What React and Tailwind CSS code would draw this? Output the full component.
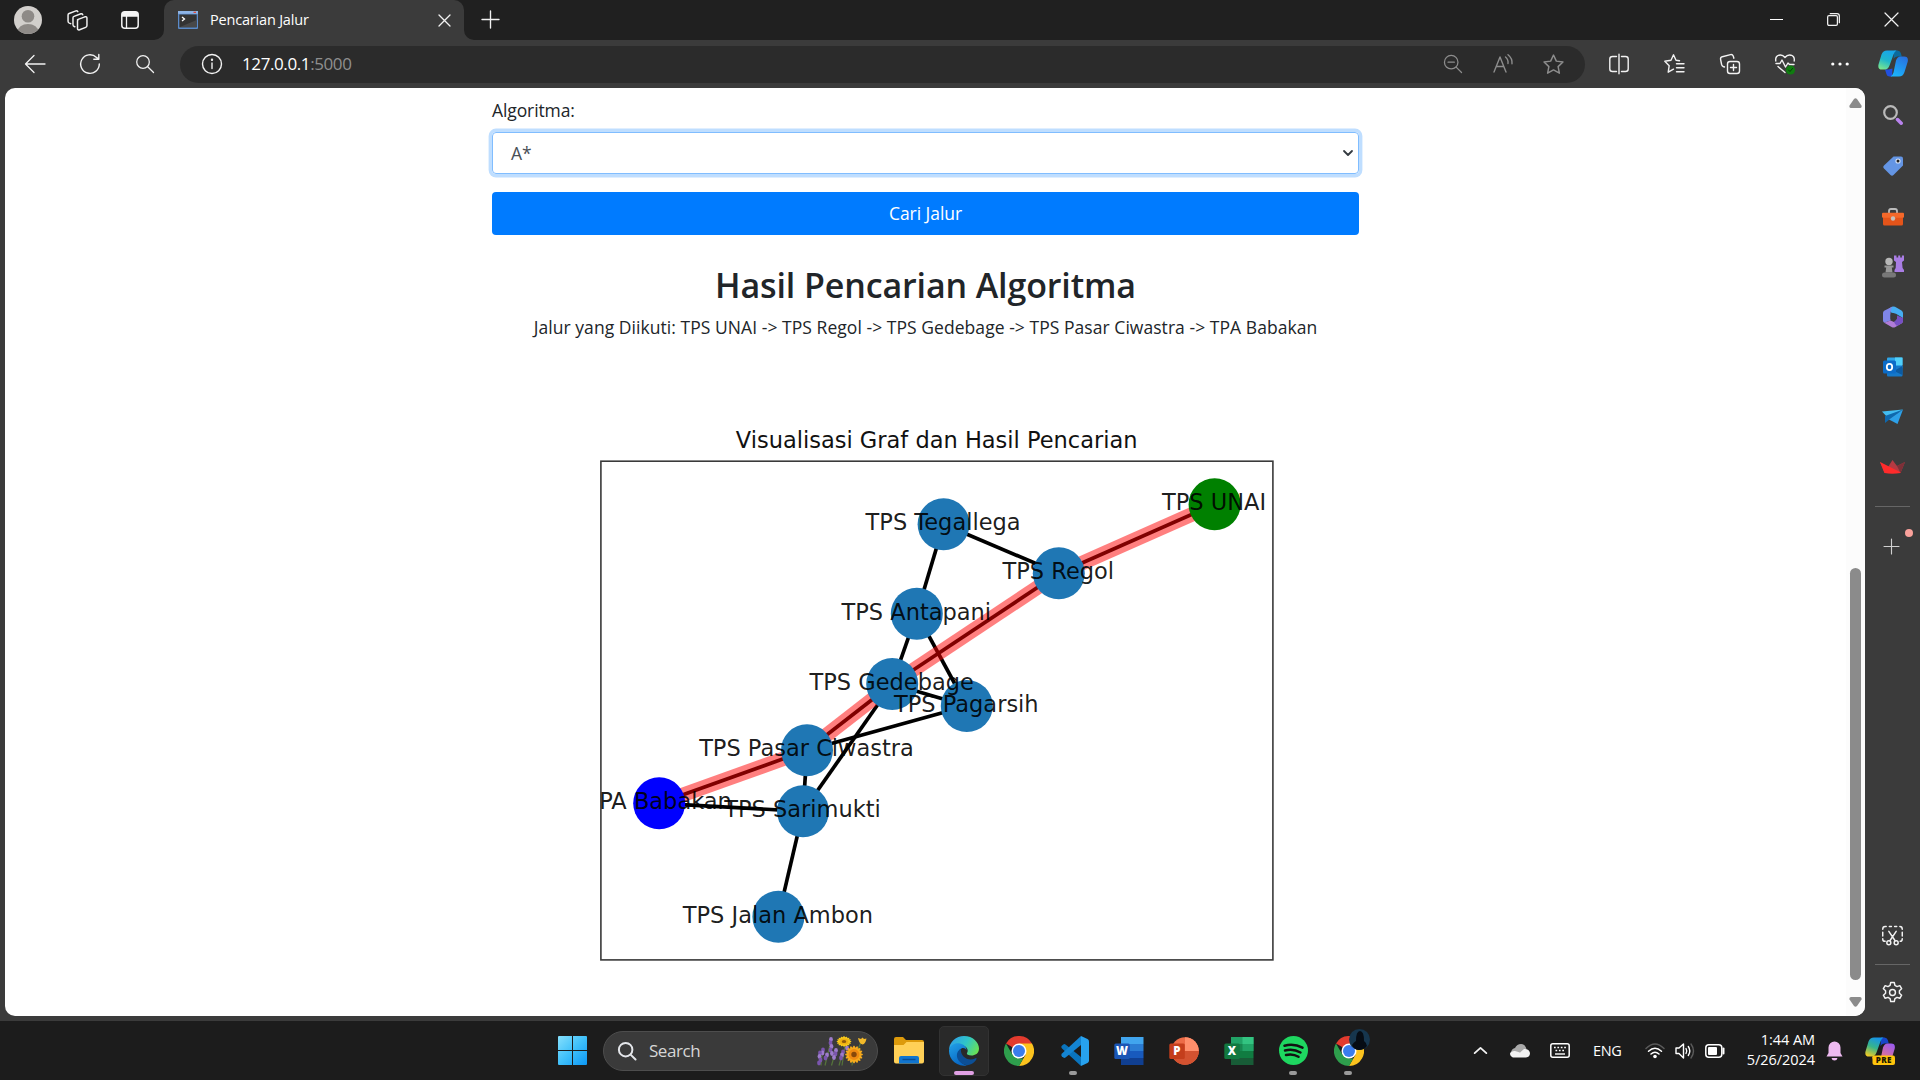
import React from "react";

const NODES = {
  tegallega: { x: 943.6, y: 524.3, label: "TPS Tegallega" },
  unai: { x: 1214.6, y: 504.3, label: "TPS UNAI", fill: "#008000" },
  regol: { x: 1058.8, y: 573.3, label: "TPS Regol" },
  antapani: { x: 916.8, y: 613.7, label: "TPS Antapani" },
  gedebage: { x: 892.2, y: 684, label: "TPS Gedebage" },
  pagarsih: { x: 966.8, y: 706, label: "TPS Pagarsih" },
  ciwastra: { x: 807, y: 750.3, label: "TPS Pasar Ciwastra" },
  babakan: { x: 659.2, y: 803.3, label: "TPA Babakan", fill: "#0000ff" },
  sarimukti: { x: 803, y: 811.3, label: "TPS Sarimukti" },
  ambon: { x: 778.4, y: 916.7, label: "TPS Jalan Ambon" },
};

const PATH = [
  ["unai", "regol"],
  ["regol", "gedebage"],
  ["gedebage", "ciwastra"],
  ["ciwastra", "babakan"],
];

const EDGES = [
  ...PATH,
  ["tegallega", "regol"],
  ["tegallega", "antapani"],
  ["antapani", "gedebage"],
  ["antapani", "pagarsih"],
  ["gedebage", "pagarsih"],
  ["gedebage", "sarimukti"],
  ["ciwastra", "pagarsih"],
  ["ciwastra", "sarimukti"],
  ["babakan", "sarimukti"],
  ["sarimukti", "ambon"],
];

function Line({ edge, ...rest }) {
  const [a, b] = edge.map((k) => NODES[k]);
  return <line x1={a.x} y1={a.y} x2={b.x} y2={b.y} {...rest} />;
}

function Graph() {
  return (
    <svg viewBox="590 410 700 560" className="mt-[69px] ml-[98px] block h-[560px] w-[700px] shrink-0 font-['DejaVu_Sans',sans-serif]">
      <defs>
        <clipPath id="axes">
          <rect x="600" y="461" width="673" height="499" />
        </clipPath>
      </defs>
      <text x="936.7" y="448" fontSize="22.5" textAnchor="middle" fill="#111">Visualisasi Graf dan Hasil Pencarian</text>
      {EDGES.map((e) => (
        <Line key={e.join()} edge={e} stroke="#000" strokeWidth="3.7" />
      ))}
      {PATH.map((e) => (
        <Line key={e.join()} edge={e} stroke="#ff0000" strokeOpacity="0.5" strokeWidth="14.5" />
      ))}
      {Object.entries(NODES).map(([k, n]) => (
        <circle key={k} cx={n.x} cy={n.y} r="26" fill={n.fill || "#1f77b4"} />
      ))}
      <rect x="600.9" y="461.2" width="672" height="498.7" fill="none" stroke="#3a3a3a" strokeWidth="1.6" />
      <g clipPath="url(#axes)">
        {Object.entries(NODES).map(([k, n]) => (
          <text key={k} x={n.x - 0.5} y={n.y + 6} fontSize="22.5" textAnchor="middle" fill="#000" fillOpacity="0.9">{n.label}</text>
        ))}
      </g>
    </svg>
  );
}

function Cell({ className = "", children }) {
  return <div className={"flex shrink-0 items-center justify-center " + className}>{children}</div>;
}

function Ico({ s = 20, w = 1.4, c = "#f2f2f2", children }) {
  return (
    <svg width={s} height={s} viewBox="0 0 20 20" fill="none" stroke={c} strokeWidth={w} strokeLinecap="round" strokeLinejoin="round" className="block shrink-0 overflow-visible">
      {children}
    </svg>
  );
}

function TitleBar() {
  return (
    <div className="flex h-10 shrink-0 bg-[#202020]">
      <Cell className="w-14">
        <svg width="28" height="28" viewBox="0 0 28 28">
          <defs><clipPath id="av"><circle cx="14" cy="14" r="14" /></clipPath></defs>
          <g clipPath="url(#av)">
            <rect width="28" height="28" fill="#d2cfcc" />
            <circle cx="14" cy="10.3" r="6.3" fill="#8e8a87" />
            <ellipse cx="14" cy="26" rx="10.5" ry="8" fill="#8e8a87" />
          </g>
        </svg>
      </Cell>
      <Cell className="w-[43px]">
        <Ico s={21} w={1.4}>
          <path d="M10 9.200 17 6.500q2-.6 2 1.300v7q0 1.200-1.200 1.700L12 18.800q-2 .6-2-1.300V10.300q0-.8.8-1.200Z" />
          <path d="M7.500 16 6.800 15.700Q5.700 15.300 5.700 14V7.400q0-.9 1-1.300l6.600-2.500q1.200-.3 1.700.9" />
          <path d="M3.500 13 2.200 12.500Q1 12 1 10.700V4.700q0-1 1-1.400L8.500 .8q1.200-.3 1.800.8" />
        </Ico>
      </Cell>
      <Cell className="w-[62px]">
        <svg width="18" height="18" viewBox="0 0 18 18" fill="none">
          <rect x=".8" y=".8" width="16.400" height="16.400" rx="3" stroke="#f4f4f4" strokeWidth="1.500" />
          <path d="M.8 5.800V4A3.200 3.200 0 0 1 4 .8h10A3.200 3.200 0 0 1 17.200 4v1.800Z" fill="#f4f4f4" />
          <path d="M5.500 5v12" stroke="#f4f4f4" strokeWidth="1.300" />
        </svg>
      </Cell>
      <div className="flex h-10">
        <svg width="10" height="10" className="-ml-[7px] block self-end"><path d="M0 10A10 10 0 0 0 10 0V10Z" fill="#3b3b3b" /></svg>
        <div className="flex h-10 w-[300px] items-center rounded-t-[10px] bg-[#3b3b3b] pr-[14px] pl-[14px]">
          <svg width="20" height="18" viewBox="0 0 20 18">
            <rect width="20" height="18" rx="1" fill="#5b8bc9" />
            <rect width="20" height="2.800" fill="#8db4e6" />
            <rect x="15.500" y=".7" width="2.500" height="1.300" fill="#e04a3a" />
            <rect x="1.300" y="3.500" width="17.400" height="12.800" fill="#333" />
            <path d="M1.300 16.300 18.700 9v7.300Z" fill="#484848" />
            <path d="m4 6 2.500 2L4 10" stroke="#fff" strokeWidth="1.300" fill="none" />
          </svg>
          <span className="ml-3 flex-1 text-[14.5px] tracking-[-0.19px] text-white">Pencarian Jalur</span>
          <Ico s={11} w={2.4}><path d="m0 0 20 20M20 0 0 20" /></Ico>
        </div>
        <svg width="10" height="10" className="block self-end"><path d="M10 10A10 10 0 0 1 0 0V10Z" fill="#3b3b3b" /></svg>
      </div>
      <Cell className="ml-[5px] h-[39px] w-[22px]"><Ico s={17} w={1.6}><path d="M10 0v20M0 10h20" /></Ico></Cell>
      <div className="flex-1" />
      <Cell className="h-[39px] w-[57px]"><div className="h-px w-[13px] bg-white" /></Cell>
      <Cell className="h-[39px] w-[57px]">
        <Ico s={13} w={1.9}><rect x="1" y="4" width="15" height="15" rx="2" /><path d="M5 1h10.500Q19 1 19 4.500V15" /></Ico>
      </Cell>
      <Cell className="h-[39px] w-[58px]"><Ico s={13} w={1.9}><path d="m0 0 20 20M20 0 0 20" /></Ico></Cell>
    </div>
  );
}

const STAR = "m10 1 2.700 5.800 6.300.8-4.600 4.400 1.200 6.300L10 15.200 4.400 18.300l1.200-6.300L1 7.600l6.300-.8Z";

function CopilotMark({ s = 30, pre }) {
  const id = pre ? "cpb" : "cpa";
  return (
    <svg width={s} height={s} viewBox="0 0 30 30" className="block shrink-0">
      <defs>
        <linearGradient id={id + "1"} x1="0.600" y1="0" x2="0.200" y2="1">
          <stop offset="0" stopColor={pre ? "#1694e8" : "#18a5ea"} />
          <stop offset=".5" stopColor={pre ? "#37b58a" : "#1fb6cc"} />
          <stop offset="1" stopColor={pre ? "#f5cc22" : "#7be78d"} />
        </linearGradient>
        <linearGradient id={id + "2"} x1="0.800" y1="0" x2="0.300" y2="1">
          <stop offset="0" stopColor={pre ? "#9a5bf0" : "#2870e0"} />
          <stop offset="1" stopColor={pre ? "#f77a72" : "#1bb4fb"} />
        </linearGradient>
      </defs>
      <path d="M16 1.500h3.500Q22 1.500 22.800 4l1 3.500h-4.500q-2.500 0-3.800 2.500Z" fill={pre ? "#1746c8" : "#0b6a9c"} />
      <path d="M14 27.500h-2.500q-2.300 0-3-2.200L7 20.500h3.500l4-1Z" fill={pre ? "#ec9c35" : "#2150df"} />
      <path d="M9 1.500H18.500q-2 1-3 4L11.500 16.500Q10 20.500 7 20.500H4Q-.5 20.500.5 15.500L3.500 5.500Q5 1.500 9 1.500Z" fill={"url(#" + id + "1)"} />
      <path d="M21 27.500H12.500q2-1 3-4L18 11.500Q19.500 7.500 22.500 7.500H26q4.800 0 3.700 5.200L26.500 23Q25 27.500 21 27.500Z" fill={"url(#" + id + "2)"} />
      {pre && <rect x="7.500" y="19.500" width="22.500" height="9.500" rx="2" fill="#ffc40c" />}
      {pre && <text x="18.800" y="27.200" fontSize="8" fontWeight="800" textAnchor="middle" fill="#201800" letterSpacing=".4">PRE</text>}
    </svg>
  );
}

function Toolbar() {
  return (
    <div className="flex h-12 shrink-0 items-center bg-[#3b3b3b]">
      <Cell className="ml-[10px] w-[50px]"><Ico w={1.3}><path d="M20 10H.5M9 1.500 0.500 10 9 18.500" /></Ico></Cell>
      <Cell className="w-[60px]"><Ico><path d="M19.300 10A9.300 9.300 0 1 1 16.500 3.400L18.500 5M18.800 .5V5.200h-5" /></Ico></Cell>
      <Cell className="w-[50px]"><Ico s={18}><circle cx="7.800" cy="7.800" r="7" /><path d="m13 13 6.500 6.500" /></Ico></Cell>
      <div className="ml-[10px] flex h-[37px] w-[1405px] items-center rounded-full bg-[#2b2b2b] pl-[22px]">
        <Ico><circle cx="10" cy="10" r="9.500" /><path d="M10 9v5.500" /><circle cx="10" cy="5.800" r=".5" fill="#fff" /></Ico>
        <span className="ml-5 flex-1 text-[17px] tracking-[-0.4px] text-white">127.0.0.1<span className="text-[#8f8f8f]">:5000</span></span>
        <Cell className="w-[50px]"><Ico s={18} c="#8d8d8d"><circle cx="8" cy="8" r="7.500" /><path d="m13.500 13.500 6 6M4.500 8h7" /></Ico></Cell>
        <Cell className="w-[50px]"><Ico s={20} c="#8d8d8d"><path d="m1 18 6-15 6 15M3.300 12.500h7.400M12.500 3q3 2.500 2.500 6.500M15 .8q4.500 3.500 4 9" /></Ico></Cell>
        <Cell className="mr-[7px] w-[50px]"><Ico s={21} c="#8d8d8d"><path d={STAR} /></Ico></Cell>
      </div>
      <Cell className="ml-[6px] w-[55px]"><Ico><path d="M7.500 2.500H3.500Q.8 2.500.8 5v10q0 2.500 2.700 2.500h4M12.500 2.500h4q2.700 0 2.700 2.500v10q0 2.500-2.700 2.500h-4M10 .3v19.400" /></Ico></Cell>
      <Cell className="w-[56px]"><Ico><path d="M15.500 6.700 12 6.300 9.500.8 7 6.300 .8 7.200l4.400 4.500-1 6.500 5.300-3M12.500 9.700H20M12.500 13.700H20M12.500 17.700H20" /></Ico></Cell>
      <Cell className="w-[55px]"><Ico><rect x="7.500" y="7.500" width="12" height="12" rx="2.500" /><path d="M13.500 10.500v6M10.500 13.500h6M4.500 13 3.200 12.500Q2 12 1.600 10.500L.6 5.500Q.2 3.300 2.300 2.700L10.500.6Q12.500.2 13.200 2l.7 2.200" /></Ico></Cell>
      <Cell className="w-[55px]">
        <Ico><path d="M.8 7Q0 2.500 4 1.200 7.500.4 10 3.500 12.500.4 16 1.200 20 2.500 19.200 7M1 9.500h4L7 6l3.500 7L13 9l1.500 1.500H19M3 12.500l7 6" /><circle cx="15.500" cy="16" r="4.600" fill="#107c10" stroke="none" /><path d="m13.500 16 1.500 1.500 2.500-3" stroke="#063f06" strokeWidth="1" /></Ico>
      </Cell>
      <Cell className="w-[55px]"><Ico s={18} w={0} c="none"><g fill="#fff"><circle cx="2" cy="10" r="1.800" /><circle cx="10" cy="10" r="1.800" /><circle cx="18" cy="10" r="1.800" /></g></Ico></Cell>
      <Cell className="ml-[11px] w-[30px]"><CopilotMark /></Cell>
    </div>
  );
}

function Page() {
  return (
    <div className="flex h-[928px] w-[1860px] shrink-0 overflow-hidden rounded-[10px] bg-white">
      <main className="flex w-[1841px] flex-col pl-[487px] text-[17.5px] text-[#212529]">
        <div className="mt-2 flex h-7 items-center tracking-[-0.1px]">Algoritma:</div>
        <div className="mt-2 flex h-[42px] w-[867px] shrink-0 items-center justify-between rounded border border-[#80bdff] pr-[5px] pl-[18px] text-[#495057] ring-[3.4px] ring-[#bfdeff]">
          <span>A*</span>
          <Ico s={10} w={3.6} c="#343a40"><path d="m2 6 8 8 8-8" /></Ico>
        </div>
        <button className="mt-[18px] h-[43px] w-[867px] shrink-0 rounded bg-[#007bff] tracking-[-0.05px] text-white">Cari Jalur</button>
        <h2 className="mt-[29px] h-[43px] w-[867px] shrink-0 text-center text-[34px] leading-[43px] font-semibold tracking-[-0.12px]">Hasil Pencarian Algoritma</h2>
        <p className="mt-[7px] h-[27px] w-[867px] shrink-0 text-center leading-[27px] tracking-[0.05px] whitespace-nowrap">Jalur yang Diikuti: TPS UNAI -&gt; TPS Regol -&gt; TPS Gedebage -&gt; TPS Pasar Ciwastra -&gt; TPA Babakan</p>
        <Graph />
      </main>
      <div className="flex w-[19px] flex-col items-center bg-[#fcfcfc]">
        <svg width="13" height="10" className="mt-[10px]"><path d="M5 1Q6.500-.5 8 1l4.500 6.500Q13 10 11 10H2Q0 10 .5 7.500Z" fill="#8b8b8b" /></svg>
        <div className="mt-[460px] h-[412px] w-[11px] rounded-full bg-[#8b8b8b]" />
        <svg width="13" height="10" className="mt-[17px]"><path d="M5 9Q6.500 10.500 8 9l4.500-6.500Q13 0 11 0H2Q0 0 .5 2.500Z" fill="#8b8b8b" /></svg>
      </div>
    </div>
  );
}

function Sidebar() {
  return (
    <aside className="flex w-[55px] flex-col items-center">
      <div className="mt-[2px] flex flex-col items-center">
        <Cell className="h-[50px]"><svg width="20" height="20" viewBox="0 0 20 20" fill="none"><circle cx="7.500" cy="7.500" r="6.300" stroke="#b9b9b9" strokeWidth="2.200" /><path d="m14.500 14.500 3.700 3.700" stroke="#b983ee" strokeWidth="3.500" strokeLinecap="round" /></svg></Cell>
        <Cell className="h-[51px]"><svg width="20" height="20" viewBox="0 0 20 20"><path d="M10.500.5H18q2 0 2 2V9.500L10.500 19q-1.500 1.500-3 0L1 12.500q-1.500-1.500 0-3Z" fill="#6495e4" /><circle cx="15" cy="5" r="2.600" fill="#d8e4f8" /><circle cx="15" cy="5" r="1.500" fill="#222" /></svg></Cell>
        <Cell className="h-[51px]"><svg width="22" height="18" viewBox="0 0 22 18"><path d="M7 6V3q0-2 2-2h4q2 0 2 2v3" fill="none" stroke="#bbb" strokeWidth="1.800" /><rect x="1" y="8" width="20" height="9.500" rx="1.500" fill="#e4541a" /><rect y="4.800" width="22" height="5" rx="1" fill="#f4682a" /><circle cx="11" cy="10.500" r="2.200" fill="#c6c0bb" /></svg></Cell>
        <Cell className="h-[49px]"><svg width="22" height="23" viewBox="0 0 22 23"><path d="M12 .5h2.500v2h1.700v-2h2v2h1.700v-2H22v5l-2 1.500.6 6L22 15v2h-9.500v-2l1.200-2 .3-6-2-1.500Z" fill="#a97de4" /><circle cx="7" cy="6.500" r="3.700" fill="#b7b7b7" /><path d="M2.500 10.500h9v2H9.800l.7 5H3.500l.7-5H2.500Z" fill="#989898" /><rect y="17.500" width="14" height="5" rx="2.500" fill="#787878" /></svg></Cell>
        <Cell className="h-[51px]"><svg width="20" height="22" viewBox="0 0 20 22"><path d="M6 2.500 9 .8q1.500-.8 3 0L18.500 4.500Q20 5.500 20 7v5L13 7.800 8 6.500Z" fill="#46aef2" /><path d="M9.500.6Q7.500 3 7.500 7v7.500L1.200 16.800Q0 16 0 14.500V7Q0 5.500 1.200 4.800Z" fill="#7f86e8" /><path d="M1.200 16.800 7.500 14.500 11 16l9-4.500V15q0 1.500-1.200 2.300L12 21.200q-1.500.8-3 0Z" fill="#b07cd8" /><path d="M14 9.500 20 12v3q0 1.500-1.200 2.300L14 20q-2-1.500-3-4Q14 14 14 9.500Z" fill="#7650c4" /><path d="M10 7l4 2.300v3.500L10.500 15 7.500 13V8.500Z" fill="#3b3b3b" /></svg></Cell>
        <Cell className="h-[50px]"><svg width="20" height="20" viewBox="0 0 20 20"><rect x="4" y=".5" width="15.500" height="11" rx="1" fill="#2ea5e8" /><path d="M12 .5h7.500V8H12Z" fill="#50d0fa" /><path d="M4 9h15.500v9.500q0 1-1 1H5q-1 0-1-1Z" fill="#1578c8" /><path d="M11 14 19.500 9v9Z" fill="#0c5aa0" /><rect y="3.500" width="13" height="13" rx="1.500" fill="#0c6cc8" /><ellipse cx="6.500" cy="10" rx="2.700" ry="3.200" fill="none" stroke="#fff" strokeWidth="1.800" /></svg></Cell>
        <Cell className="h-[50px]"><svg width="21" height="16" viewBox="0 0 21 16"><path d="M0 2.500 21 .5 6 9Z" fill="#42bdf2" /><path d="M3 7v7l5-4L21 .5Z" fill="#0e68ae" /><path d="M21 .5 15.500 15 7 10.500Z" fill="#2da0e8" /></svg></Cell>
        <Cell className="h-[49px]"><svg width="25" height="14" viewBox="0 0 25 14"><path d="M0 2 8 7l4.500-7L17 6l8-4-4.500 11H4.500Z" fill="#b43a42" /><path d="M0 2 21 12.500l-.5.500Q12 14.500 4.500 13Z" fill="#ff2b2b" /><path d="m17 6 8-4-4.500 11Z" fill="#7d3038" /></svg></Cell>
      </div>
      <div className="mt-[15px] h-px w-[35px] bg-[#666]" />
      <div className="relative mt-[31px] mr-[2px] flex h-4 w-4 items-center justify-center">
        <Ico s={15} w={1.5} c="#d0d0d0"><path d="M10 0v20M0 10h20" /></Ico>
        <div className="absolute -top-[9px] left-[21px] h-2 w-2 rounded-full bg-[#f9a19b]" />
      </div>
      <div className="mt-auto" />
      <Ico s={21} w={1.4}><path d="M4 1.500H3Q.7 1.500.7 4M.7 7v3.500M.7 13v.5Q.7 15.500 3 15.500M7 1.500h2M12 1.500h2M17 1.500Q19.300 1.500 19.300 4M19.300 7v3.500M19.300 13q0 2.500-2 2.500M6.500 6l6 9M13.500 6l-6 9" /><circle cx="6.500" cy="17" r="1.900" /><circle cx="13.500" cy="17" r="1.900" /></Ico>
      <div className="mt-[18px] h-px w-[35px] bg-[#666]" />
      <div className="mt-[17px] mb-[18px]">
        <Ico s={21} w={1.4}><circle cx="10" cy="10" r="2.800" /><path d="M8.300.5h3.400l.6 2.800 2 1.100 2.700-.9 1.700 2.900-2.100 1.900v2.400l2.100 1.900-1.700 2.900-2.700-.9-2 1.200-.6 2.800H8.300l-.6-2.800-2-1.200-2.700.9-1.700-2.900 2.100-1.900V8.300L1.300 6.400 3 3.500l2.700.9 2-1.100Z" /></Ico>
      </div>
    </aside>
  );
}

function Chrome() {
  return (
    <svg width="30" height="30" viewBox="0 0 30 30" className="block">
      <path d="M15 15 2 7.500A15 15 0 0 1 28 7.500Z" fill="#e33b2e" />
      <path d="M15 7.500H28A15 15 0 0 1 15 30L21.500 18.800Z" fill="#fcc31e" />
      <path d="M2 7.500 8.500 18.800 15 22.500h4.300L15 30A15 15 0 0 1 2 7.500Z" fill="#2e9e4c" />
      <circle cx="15" cy="15" r="7.500" fill="#fff" />
      <circle cx="15" cy="15" r="6" fill="#3b7ded" />
    </svg>
  );
}

function Edge() {
  return (
    <svg width="30" height="30" viewBox="0 0 30 30" className="block">
      <defs>
        <linearGradient id="eg1" x1="0" y1="0.300" x2="1" y2="0.700"><stop offset="0" stopColor="#2f9fe8" /><stop offset=".5" stopColor="#2fc5c8" /><stop offset="1" stopColor="#6be252" /></linearGradient>
        <linearGradient id="eg2" x1="0" y1="0" x2="0.500" y2="1"><stop offset="0" stopColor="#22a2e8" /><stop offset="1" stopColor="#0867c4" /></linearGradient>
      </defs>
      <path d="M0 14A15 14.500 0 0 1 15 0c9 0 15 6.500 15 12.500 0 5-4 7-7.500 7-4 0-5-1.500-4.500-2.500 1.500-2 .8-6-4-7.500C8 7.500 2 9 0 14Z" fill="url(#eg1)" />
      <path d="M0 14.500C1 9 6 6.500 11 7.500c4 .8 6.500 3.500 6.500 6.500-1-1.500-3-2.500-5-1.500-4 2-5 8-1.500 12.500 2 2.500 4.500 4 7 4.500A15 15 0 0 1 0 14.500Z" fill="url(#eg2)" />
      <path d="M12 12.700c-4.500 2-5.500 8-2 12.300 3.500 4.200 8.500 5.200 12.500 3 2.500-1.300 4-3 5-5 .4-.9-.4-1.200-1-.8C19 26 11 20.500 12 12.700Z" fill="#0c4f96" />
    </svg>
  );
}

function Office({ letter, colors, tile }) {
  return (
    <svg width="30" height="28" viewBox="0 0 30 28" className="block">
      {colors.map((c, i) => <rect key={c} x="7" y={i * 7} width="22.500" height="7" fill={c} />)}
      {letter === "X" && <g><rect x="18.500" width="11" height="7" fill="#33c481" /><rect x="18.500" y="7" width="11" height="7" fill="#21a366" /></g>}
      <rect x=".3" y="6.500" width="15.500" height="15.500" rx="1.500" fill={tile} />
      <text x="8" y="18.400" fontSize="11.500" fontWeight="800" textAnchor="middle" fill="#fff">{letter}</text>
    </svg>
  );
}

function PowerPoint() {
  return (
    <svg width="30" height="28" viewBox="0 0 30 28" className="block">
      <circle cx="16" cy="14" r="13.800" fill="#ed6c47" />
      <path d="M16 .2A13.800 13.800 0 0 1 29.800 14H16Z" fill="#ff8f6b" />
      <path d="M2.200 14h27.600a13.800 13.800 0 0 1-27.600 0Z" fill="#d35230" />
      <rect x=".3" y="6.500" width="15.500" height="15.500" rx="1.500" fill="#c43e1c" />
      <text x="8" y="18.400" fontSize="11.500" fontWeight="800" textAnchor="middle" fill="#fff">P</text>
    </svg>
  );
}

const BUDS = [[14, 3.5], [13.5, 7], [14.5, 10.5], [13.5, 14], [15, 17.5], [6, 14], [5.500, 17], [3, 17], [2.500, 20.500], [3.500, 24], [10, 19], [8.500, 22], [19, 14.5], [18.5, 18], [17, 21.5], [26, 16], [25, 19], [24, 22], [30, 12], [2, 27]];

function Bloom({ cx, cy, rx, ry, petal, mid, core }) {
  return (
    <g transform={`translate(${cx} ${cy}) scale(${rx} ${ry})`}>
      {[0, 22.5, 45, 67.5, 90, 112.5, 135, 157.5].map((d) => (
        <ellipse key={d} rx="1" ry="0.24" fill={petal} transform={`rotate(${d})`} />
      ))}
      <circle r="0.6" fill={mid} />
      <circle r="0.3" fill={core} />
    </g>
  );
}

function Flowers() {
  return (
    <svg width="50" height="30" viewBox="0 0 50 30" className="block">
      <path d="M4 29.500 5 18M8 29.500 14 5M14.500 29.500l4-14M22 29.500l4-14M25 29.500l3-20M35 29.500l1-8M44 6l-4 10" stroke="#55743a" strokeWidth="1.200" fill="none" />
      {BUDS.map(([x, y], i) => <ellipse key={i} cx={x} cy={y} rx="1.900" ry="2.400" fill={i % 2 ? "#7a55ad" : "#9d7ccc"} />)}
      <Bloom cx={27} cy={5.5} rx={7.5} ry={5.2} petal="#f8c91c" mid="#eeb012" core="#8f5a0a" />
      <Bloom cx={37} cy={18.5} rx={9} ry={9} petal="#f7ab1d" mid="#ee8a12" core="#87480a" />
      <path d="m41 2 3 1 1.500-1.500 1.500 1.500 2.500-.5q-1 5.500-4 6Q42 7.500 41 2Z" fill="#f2b92a" />
    </svg>
  );
}

function TaskIcon({ mark, children }) {
  return (
    <div className="relative flex h-[50px] w-[55px] shrink-0 items-center justify-center">
      {children}
      {mark && <div className="absolute bottom-[1px] left-[23px] h-1 w-2 rounded-full bg-[#9a9a9a]" />}
    </div>
  );
}

function Taskbar() {
  return (
    <div className="flex h-[59px] shrink-0 items-center bg-[#1c1c1c] text-white">
      <svg width="29" height="29" viewBox="0 0 29 29" className="ml-[558px] block">
        <defs><linearGradient id="win" x1="0" y1="0" x2="1" y2="1"><stop offset="0" stopColor="#86e0fc" /><stop offset=".5" stopColor="#3fc0fa" /><stop offset="1" stopColor="#0c97f5" /></linearGradient></defs>
        <path d="M1 0h13v14H0V1Q0 0 1 0ZM15 0h13q1 0 1 1v13H15ZM0 15h14v14H1q-1 0-1-1ZM15 15h14v13q0 1-1 1H15Z" fill="url(#win)" />
      </svg>
      <div className="ml-4 flex h-10 w-[275px] items-center rounded-full border border-[#4d4d4d] bg-[#3a3a3a] pr-[10px] pl-[14px]">
        <Ico s={18} w={2.2} c="#e4e6ea"><circle cx="8.500" cy="8.500" r="7.500" /><path d="m14 14 5.500 5.500" /></Ico>
        <span className="ml-[13px] flex-1 text-[17px] tracking-[-0.45px] text-[#d6d6d6]">Search</span>
        <Flowers />
      </div>
      <div className="ml-[3px] flex">
        <TaskIcon>
          <svg width="30" height="27" viewBox="0 0 30 27">
            <path d="M0 2q0-2 2-2h7l3 3h16q2 0 2 2v8H0Z" fill="#dd9a0b" />
            <path d="M0 8h9.500l3-3H30v19.500q0 2-2 2H2q-2 0-2-2Z" fill="#ffd057" />
            <path d="M5 26.500V21q0-2 2-2h16q2 0 2 2v5.500Z" fill="#1175cf" />
            <path d="M8.500 22.500h13" stroke="#0a4d94" strokeWidth="1.400" />
          </svg>
        </TaskIcon>
        <TaskIcon>
          <div className="relative flex h-[50px] w-[50px] items-center justify-center rounded-[5px] border border-[#323232] bg-[#292929]">
            <Edge />
            <div className="absolute bottom-0 left-[14px] h-1 w-5 rounded-full bg-[#e0a0e4]" />
          </div>
        </TaskIcon>
        <TaskIcon><Chrome /></TaskIcon>
        <TaskIcon mark>
          <svg width="30" height="30" viewBox="0 0 30 30">
            <path d="M22 0v30L3 12.500q-1.500-1.500-.2-2.800l1.500-1.300q1-.8 2.200 0L22 21Z" fill="#0a74bd" />
            <path d="M22 0v9L6.500 21.600q-1.200.8-2.200 0L2.800 20.300q-1.300-1.300.2-2.800Z" fill="#1484d2" />
            <path d="m22 0 6.500 3Q30 3.800 30 5.500v19q0 1.700-1.500 2.500L22 30Z" fill="#27a2ef" />
          </svg>
        </TaskIcon>
        <TaskIcon><Office letter="W" tile="#1a55b5" colors={["#41a5ee", "#2b7cd3", "#185abd", "#103f91"]} /></TaskIcon>
        <TaskIcon><PowerPoint /></TaskIcon>
        <TaskIcon><Office letter="X" tile="#12783f" colors={["#21a366", "#17864f", "#107c41", "#185c37"]} /></TaskIcon>
        <TaskIcon mark>
          <svg width="29" height="29" viewBox="0 0 29 29"><circle cx="14.500" cy="14.500" r="14.500" fill="#1ed760" /><path d="M5.500 9.700q9.500-2.500 18 2M6 14.500q8.500-2 15.500 2M7 19q7-1.600 12.500 1.800" fill="none" stroke="#121212" strokeWidth="2.500" strokeLinecap="round" /></svg>
        </TaskIcon>
        <TaskIcon mark>
          <Chrome />
          <svg width="21" height="21" viewBox="0 0 21 21" className="absolute top-[3px] left-[28px]"><circle cx="10.500" cy="10.500" r="10.500" fill="#16364e" /><path d="M3 16q2-3 4-4Q7 2 11 2t4 10q2 1 3 5-3 4-8 4T3 16Z" fill="#060c14" /></svg>
        </TaskIcon>
      </div>
      <div className="flex-1" />
      <Cell className="w-[30px]"><Ico s={13} w={2.8}><path d="m1 14 9-8 9 8" /></Ico></Cell>
      <svg width="20" height="14" viewBox="0 0 20 14" className="ml-[15px]"><path d="M1 8q1-3.500 4-4Q7 0 11 0q4.500.5 5.500 5L10 9Z" fill="#a9a9a9" /><path d="M2 13Q-1 11 .5 8.500 2.500 6.500 5 7l5 1.500 4-3.500q5-.5 6 4 0 4-4 4.500H4q-1 0-2-.5Z" fill="#f2f2f2" /></svg>
      <svg width="20" height="15" viewBox="0 0 20 15" fill="none" className="ml-5"><rect x=".8" y=".8" width="18.400" height="13.400" rx="2" stroke="#fff" strokeWidth="1.500" /><path d="M4 4.500h12M5.500 7.500h10" stroke="#fff" strokeWidth="1.700" strokeDasharray="1.700 1.700" /><path d="M5 11h10" stroke="#fff" strokeWidth="1.400" /></svg>
      <span className="ml-[23px] w-[29px] text-[14.5px] tracking-[-0.4px]">ENG</span>
      <svg width="20" height="16" viewBox="0 0 20 16" fill="none" className="ml-[23px]" strokeLinecap="round" strokeWidth="1.500"><path d="M1 5.500Q10-3.500 19 5.500" stroke="#5a5a5a" /><path d="M3.500 8.300q6.500-6 13 0M6 11q4-3.500 8 0" stroke="#fff" /><circle cx="10" cy="13.500" r="1.800" fill="#fff" /></svg>
      <svg width="20" height="18" viewBox="0 0 20 18" fill="none" className="ml-[10px]" strokeLinecap="round" strokeLinejoin="round" strokeWidth="1.400"><path d="M1 6v5.500h3L8.500 16V2L4 6ZM11 6.500q1.500 2.500 0 5M13.300 4.500q3 4.500 0 9" stroke="#fff" /><path d="M16 2q5 7 0 14" stroke="#5a5a5a" /></svg>
      <svg width="20" height="14" viewBox="0 0 20 14" fill="none" className="ml-[10px]"><rect x=".8" y=".8" width="16" height="12.400" rx="3" stroke="#fff" strokeWidth="1.500" /><rect x="3" y="3" width="9" height="8" rx="1" fill="#fff" /><path d="M18.500 4.500v5" stroke="#fff" strokeWidth="2" strokeLinecap="round" /></svg>
      <div className="-mt-[2px] ml-[10px] w-20 text-right text-[14.5px] leading-5 tracking-[-0.050px] whitespace-nowrap"><div>1:44 AM</div><div>5/26/2024</div></div>
      <svg width="17" height="20" viewBox="0 0 17 20" className="ml-[11px]"><path d="M2.500 12V6.500a6 6 0 0 1 12 0V12l2 3.500H.5Z" fill="#edb9f0" /><path d="M5.500 17h6q-.5 2.500-3 2.500t-3-2.500Z" fill="#edb9f0" /></svg>
      <div className="mr-[25px] ml-[22px]"><CopilotMark s={30} pre /></div>
    </div>
  );
}

export default function App() {
  return (
    <div className="flex h-[1080px] w-[1920px] flex-col overflow-hidden bg-[#3b3b3b] font-['Open_Sans',sans-serif]">
      <TitleBar />
      <Toolbar />
      <div className="flex h-[933px] shrink-0 pl-[5px]">
        <Page />
        <Sidebar />
      </div>
      <Taskbar />
    </div>
  );
}
